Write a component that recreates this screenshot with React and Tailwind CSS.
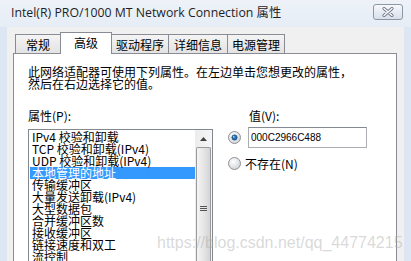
import React from 'react';

const cjk = { fontFamily: '"Noto Sans CJK SC", "Noto Sans", sans-serif' };

const tabs = [
  { label: '常规', w: 'w-[46px]' },
  { label: '高级', w: 'w-[52px]', active: true },
  { label: '驱动程序', w: 'w-[58px]' },
  { label: '详细信息', w: 'w-[60px]' },
  { label: '电源管理', w: 'w-[58px]' },
];

const items = [
  'IPv4 校验和卸载',
  'TCP 校验和卸载(IPv4)',
  'UDP 校验和卸载(IPv4)',
  '本地管理的地址',
  '传输缓冲区',
  '大量发送卸载(IPv4)',
  '大型数据包',
  '合并缓冲区数',
  '接收缓冲区',
  '链接速度和双工',
  '流控制',
];

function Radio({ checked }) {
  return (
    <svg width="13" height="13" viewBox="0 0 13 13" className="shrink-0">
      <defs>
        <radialGradient id={checked ? 'rg1' : 'rg2'} cx="0.4" cy="0.35" r="0.7">
          <stop offset="0" stopColor="#ffffff" />
          <stop offset="1" stopColor="#cfd2d6" />
        </radialGradient>
      </defs>
      <circle cx="6.5" cy="6.5" r="6" fill={`url(#${checked ? 'rg1' : 'rg2'})`} stroke="#8e9196" />
      {checked && <circle cx="6.5" cy="6.5" r="2.6" fill="#2a6fb0" stroke="#174a7c" strokeWidth="0.8" />}
      {checked && <circle cx="5.8" cy="5.8" r="0.9" fill="#9fd0ff" />}
    </svg>
  );
}

function Scrollbar() {
  return (
    <div className="w-[17px] shrink-0 flex flex-col bg-gradient-to-r from-[#ececec] to-[#f6f6f6]">
      <div className="h-[17px] flex items-center justify-center">
        <svg width="7" height="4" viewBox="0 0 7 4">
          <path d="M0 4 L3.5 0 L7 4 Z" fill="#404040" />
        </svg>
      </div>
      <div className="flex-1 mx-px rounded-t-[2px] border border-b-0 border-[#9b9b9b] bg-gradient-to-r from-[#f4f4f4] via-[#e6e6e6] to-[#d4d4d4] flex flex-col items-center pt-[58px]">
        <div className="w-[7px] flex flex-col gap-[1px]">
          <div className="h-px bg-[#555]" />
          <div className="h-px bg-[#555]" />
          <div className="h-px bg-[#555]" />
        </div>
      </div>
    </div>
  );
}

export default function App() {
  return (
    <div className="w-[411px] h-[261px] overflow-hidden relative flex flex-col bg-[#dde7f4] text-black" style={cjk}>
      {/* Title bar */}
      <div className="h-[27px] shrink-0 flex items-center pl-[11px] pr-[8px] bg-gradient-to-b from-[#eef2f8] to-[#e6edf6]">
        <span className="text-[12.3px] text-[#1e1e1e] flex-1" style={{ fontFamily: '"Open Sans", "Noto Sans CJK SC", sans-serif' }}>
          Intel(R) PRO/1000 MT Network Connection 属性
        </span>
        <div className="w-[30px] h-[16px] rounded-[3px] border border-[#8d96a3] bg-gradient-to-b from-[#f6f8fb] to-[#d9e0ea] flex items-center justify-center mb-[3px]">
          <svg width="12" height="10" viewBox="0 0 12 10">
            <path d="M2 1.5 L10 8.5 M10 1.5 L2 8.5" stroke="#6b7380" strokeWidth="3" strokeLinecap="round" />
            <path d="M2 1.5 L10 8.5 M10 1.5 L2 8.5" stroke="#ffffff" strokeWidth="1.4" strokeLinecap="round" />
          </svg>
        </div>
      </div>

      {/* Body */}
      <div className="flex-1 mx-[7px] bg-[#f0f0f0] pl-[6px] pr-[7px] pt-[5px] flex flex-col">
        <div className="flex items-end h-[21px] ml-[2px] relative z-10">
          {tabs.map((t) =>
            t.active ? (
              <div
                key={t.label}
                className={`${t.w} h-[22px] -mb-px -ml-px border border-b-0 border-[#898c95] bg-white flex items-start justify-center pt-[2px] text-[12px] leading-[16px]`}
              >
                {t.label}
              </div>
            ) : (
              <div
                key={t.label}
                className={`${t.w} h-[19px] -ml-px first:ml-0 border border-b-0 border-[#898c95] bg-gradient-to-b from-[#f4f4f4] to-[#e3e3e3] flex items-center justify-center text-[12px] leading-[16px] pt-[1px]`}
              >
                {t.label}
              </div>
            )
          )}
        </div>

        <div className="flex-1 border border-[#898c95] bg-white pl-[14px] pt-[12px]">
          <p className="text-[12px] leading-[12px]">
            此网络适配器可使用下列属性。在左边单击您想更改的属性，
            <br />
            然后在右边选择它的值。
          </p>

          <div className="flex mt-[20px]">
            <div className="w-[185px] shrink-0">
              <div className="text-[12px] leading-[12px] h-[19px]">属性(P):</div>
              <div className="h-[140px] border border-[#828790] flex">
                <div className="flex-1 pt-px pl-px">
                  {items.map((it, i) => (
                    <div
                      key={it}
                      className={`h-[12px] text-[12px] leading-[12px] whitespace-nowrap pl-[2px] ${
                        i === 3 ? 'bg-[#3399ff] text-white' : ''
                      }`}
                    >
                      {it}
                    </div>
                  ))}
                </div>
                <Scrollbar />
              </div>
            </div>

            <div className="ml-[15px] flex-1">
              <div className="text-[12px] leading-[12px] h-[17px] pl-[21px]">值(V):</div>
              <div className="flex items-center">
                <Radio checked />
                <div
                  className="ml-[7px] w-[119px] h-[21px] border border-[#abadb3] border-t-[#858a93] bg-white flex items-center pl-[2px] text-[10px]"
                  style={{ fontFamily: '"Liberation Sans", Arial, sans-serif' }}
                >
                  000C2966C488
                </div>
              </div>
              <div className="flex items-center mt-[9px] gap-[4px]">
                <Radio />
                <span className="text-[12px] leading-[12px]">不存在(N)</span>
              </div>
            </div>
          </div>
        </div>
      </div>

      {/* watermark */}
      <div
        className="absolute left-[157px] top-[234px] text-[16px] leading-[18px] text-[rgba(170,170,170,0.45)] whitespace-nowrap pointer-events-none"
        style={{ fontFamily: '"Liberation Sans", Arial, sans-serif' }}
      >
        https://blog.csdn.net/qq_44774215
      </div>
    </div>
  );
}
